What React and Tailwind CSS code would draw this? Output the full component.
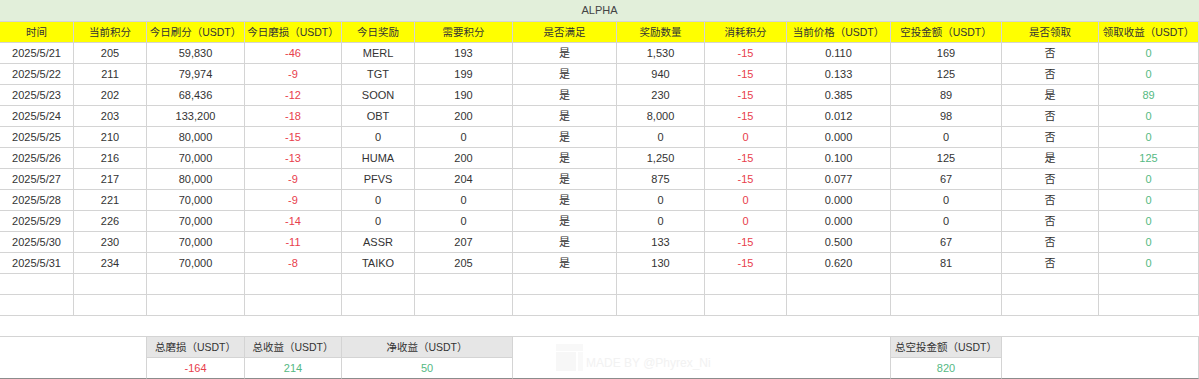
import React from 'react';

const cols = 'grid-cols-[74px_73px_98px_97px_73px_98px_104px_88px_82px_104px_111px_97px_100px]';

const headers = [
    '时间',
    '当前积分',
    '今日刷分（USDT）',
    '今日磨损（USDT）',
    '今日奖励',
    '需要积分',
    '是否满足',
    '奖励数量',
    '消耗积分',
    '当前价格（USDT）',
    '空投金额（USDT）',
    '是否领取',
    '领取收益（USDT）',
];

// date, points, volume, loss, token, need, ok, amount, cost, price, airdrop, claimed, profit
const rows = [
    ['2025/5/21', '205', '59,830', '-46', 'MERL', '193', '是', '1,530', '-15', '0.110', '169', '否', '0'],
    ['2025/5/22', '211', '79,974', '-9', 'TGT', '199', '是', '940', '-15', '0.133', '125', '否', '0'],
    ['2025/5/23', '202', '68,436', '-12', 'SOON', '190', '是', '230', '-15', '0.385', '89', '是', '89'],
    ['2025/5/24', '203', '133,200', '-18', 'OBT', '200', '是', '8,000', '-15', '0.012', '98', '否', '0'],
    ['2025/5/25', '210', '80,000', '-15', '0', '0', '是', '0', '0', '0.000', '0', '否', '0'],
    ['2025/5/26', '216', '70,000', '-13', 'HUMA', '200', '是', '1,250', '-15', '0.100', '125', '是', '125'],
    ['2025/5/27', '217', '80,000', '-9', 'PFVS', '204', '是', '875', '-15', '0.077', '67', '否', '0'],
    ['2025/5/28', '221', '70,000', '-9', '0', '0', '是', '0', '0', '0.000', '0', '否', '0'],
    ['2025/5/29', '226', '70,000', '-14', '0', '0', '是', '0', '0', '0.000', '0', '否', '0'],
    ['2025/5/30', '230', '70,000', '-11', 'ASSR', '207', '是', '133', '-15', '0.500', '67', '否', '0'],
    ['2025/5/31', '234', '70,000', '-8', 'TAIKO', '205', '是', '130', '-15', '0.620', '81', '否', '0'],
];

const cell = 'h-[21px] border-t border-r border-[#d4d4d4] flex items-center justify-center';

const colorFor = (i) => {
    if (i === 3 || i === 8) return 'text-[#e8404c]';
    if (i === 12) return 'text-[#55b983]';
    return 'text-[#333]';
};

const App = () => {
    return (
        <div
            className="w-[1199px] bg-white text-[11px] text-[#333] leading-none"
            style={{ fontFamily: '"Liberation Sans", "Noto Sans CJK SC", sans-serif' }}
        >
            <div className={`grid ${cols}`}>
                <div className="col-span-13 h-[21px] bg-[#e2efda] flex items-center justify-center text-[#444]">
                    ALPHA
                </div>

                {headers.map((h) => (
                    <div key={h} className={`${cell} bg-[#ffff00] text-[#333] text-[10.5px]`}>
                        {h}
                    </div>
                ))}

                {rows.map((r) =>
                    r.map((v, i) => (
                        <div key={r[0] + i} className={`${cell} ${colorFor(i)}`}>
                            {v}
                        </div>
                    ))
                )}

                {[0, 1].map((k) =>
                    headers.map((h) => <div key={k + h} className={cell}></div>)
                )}

                <div className="col-span-13 h-[21px] border-t border-[#d4d4d4]"></div>

                {/* summary */}
                <div className="col-span-2 row-span-2 border-t border-r border-b border-[#d4d4d4] border-b-[#8c8c8c]"></div>
                <div className={`${cell} bg-[#e6e6e6] text-[10.5px]`}>总磨损（USDT）</div>
                <div className={`${cell} bg-[#e6e6e6] text-[10.5px]`}>总收益（USDT）</div>
                <div className={`${cell} col-span-2 bg-[#e6e6e6] text-[10.5px]`}>净收益（USDT）</div>
                <div className="col-span-4 row-span-2 border-t border-r border-b border-[#d4d4d4] border-b-[#8c8c8c] flex items-center pl-[43px]">
                    <div className="flex items-end gap-[3px] opacity-50">
                        <svg width="27" height="27" viewBox="0 0 27 27">
                            <rect x="0" y="0" width="27" height="7" fill="#f2f2f2" />
                            <rect x="0" y="8" width="20" height="19" fill="#f0f0f0" />
                            <rect x="22" y="8" width="5" height="19" fill="#f4f4f4" />
                        </svg>
                        <span className="text-[12px] text-[#e6e6e6] mb-[2px]">MADE BY @Phyrex_Ni</span>
                    </div>
                </div>
                <div className={`${cell} bg-[#e6e6e6] text-[10.5px]`}>总空投金额（USDT）</div>
                <div className="col-span-2 row-span-2 border-t border-r border-b border-[#d4d4d4] border-b-[#8c8c8c]"></div>

                <div className={`${cell} border-b border-b-[#8c8c8c] h-[22px] text-[#e8404c]`}>-164</div>
                <div className={`${cell} border-b border-b-[#8c8c8c] h-[22px] text-[#55b983]`}>214</div>
                <div className={`${cell} border-b border-b-[#8c8c8c] h-[22px] col-span-2 text-[#55b983]`}>50</div>
                <div className={`${cell} border-b border-b-[#8c8c8c] h-[22px] text-[#55b983]`}>820</div>
            </div>
        </div>
    );
};

export default App;
